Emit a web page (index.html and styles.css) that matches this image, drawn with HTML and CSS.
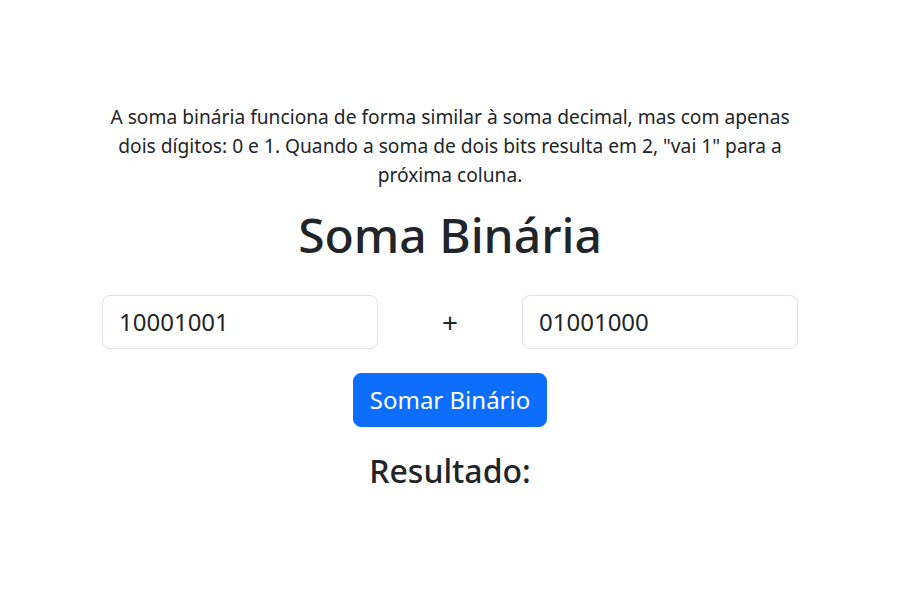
FILE: index.html
```html
<!DOCTYPE html>
<html lang="pt">
<head>
<meta charset="utf-8">
<title>Soma Binária</title>
<link rel="stylesheet" href="styles.css">
</head>
<body>
<main class="container">
  <p class="intro">A soma binária funciona de forma similar à soma decimal, mas com apenas dois dígitos: 0 e 1. Quando a soma de dois bits resulta em 2, "vai 1" para a próxima coluna.</p>
  <h1 class="title">Soma Binária</h1>
  <div class="row">
    <div class="col-side"><input class="field" type="text" value="10001001"></div>
    <div class="col-mid"><span class="plus">+</span></div>
    <div class="col-side"><input class="field" type="text" value="01001000"></div>
  </div>
  <div class="actions"><button class="btn" type="button">Somar Binário</button></div>
  <h2 class="result">Resultado:</h2>
</main>
</body>
</html>
```
FILE: styles.css
```css
* { box-sizing: border-box; }
body {
  margin: 0;
  font-family: "Noto Sans", "Liberation Sans", sans-serif;
  color: #212529;
  background: #fff;
}
.container {
  width: 720px;
  margin: 0 auto;
  padding: 103px 12px 0;
  text-align: center;
}
.intro {
  margin: 0 0 17px;
  font-size: 19.2px;
  line-height: 28.8px;
}
.title {
  margin: 0 0 31px;
  font-size: 48px;
  font-weight: 500;
  line-height: 1.2;
}
.row {
  display: grid;
  grid-template-columns: 276px 1fr 276px;
  column-gap: 24px;
  align-items: center;
}
.field {
  width: 100%;
  height: 54px;
  padding: 0 16px;
  font-family: inherit;
  font-size: 24px;
  color: #212529;
  border: 1px solid #dee2e6;
  border-radius: 8px;
  background: #fff;
}
.plus { font-size: 28px; }
.actions { margin-top: 24px; }
.btn {
  height: 54px;
  padding: 0 16px;
  font-family: inherit;
  font-size: 24px;
  color: #fff;
  background: #0d6efd;
  border: 1px solid #0d6efd;
  border-radius: 8px;
}
.result {
  margin: 25px 0 0;
  font-size: 32px;
  font-weight: 500;
  line-height: 1.2;
}
```
